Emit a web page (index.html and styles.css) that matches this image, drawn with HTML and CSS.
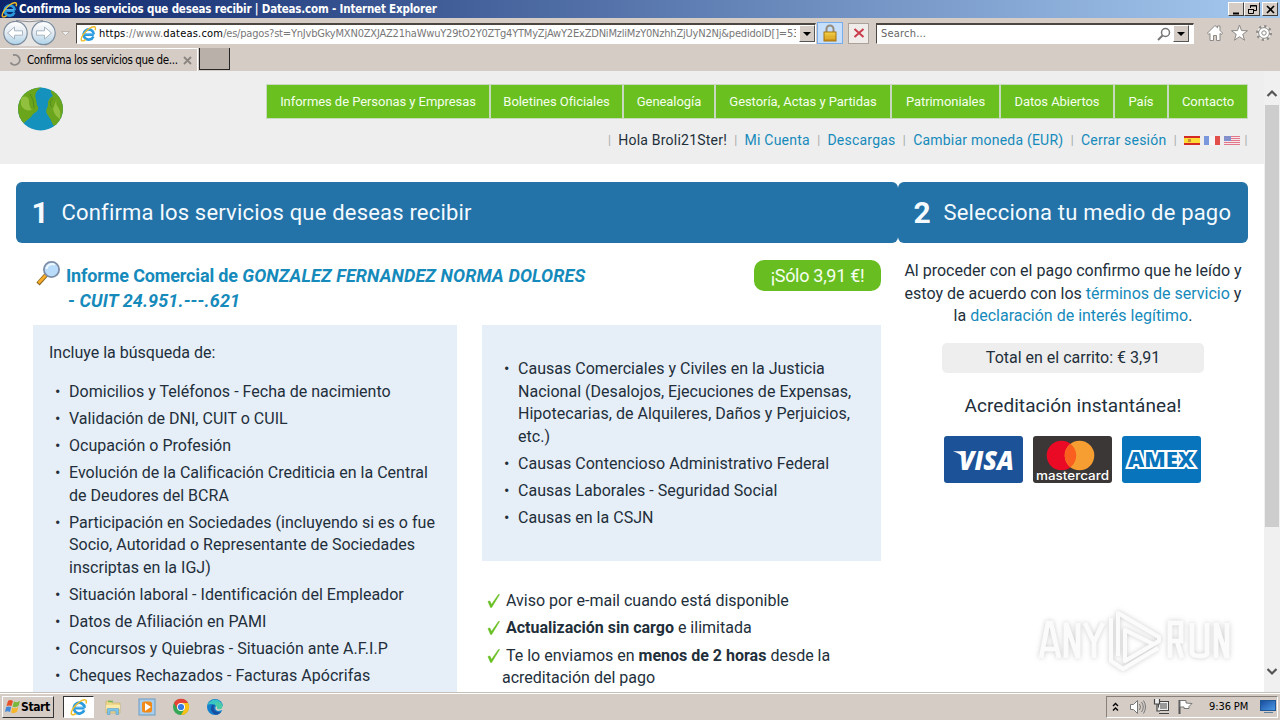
FILE: index.html
```html
<!DOCTYPE html>
<html lang="es">
<head>
<meta charset="utf-8">
<title>Confirma los servicios que deseas recibir | Dateas.com</title>
<link rel="stylesheet" href="styles.css">
</head>
<body>
<svg class="defs" width="0" height="0">
  <defs>
    <linearGradient id="round" x1="0" y1="0" x2="0" y2="1"><stop offset="0" stop-color="#fff"/><stop offset=".5" stop-color="#e3eaf1"/><stop offset="1" stop-color="#aed4ea"/></linearGradient>
    <linearGradient id="gold" x1="0" y1="0" x2="0" y2="1"><stop offset="0" stop-color="#f8d84e"/><stop offset="1" stop-color="#c88a10"/></linearGradient>
    <linearGradient id="screen" x1="0" y1="0" x2="1" y2="1"><stop offset="0" stop-color="#174b9c"/><stop offset="1" stop-color="#4c9be8"/></linearGradient>
    <symbol id="ie" viewBox="0 0 18 18">
      <path d="M14.6 10.2H5.4M14.2 12.2A5.4 5.4 0 1 1 14.6 9.8" fill="none" stroke="#2b9be0" stroke-width="2.8"/>
      <path d="M5.5 9.2h8" stroke="#86d0f8" stroke-width=".8"/>
      <path d="M16 5.5C17.5 1.500 14.500 .4 9.500 4 4.500 7.500 .3 13.500 1.500 16.200 2.300 17.500 4.500 16.500 6 15.300" fill="none" stroke="#f0bd27" stroke-width="1.500"/>
    </symbol>
  </defs>
</svg>

<div class="titlebar">
  <svg class="ico-title" width="17" height="17"><use href="#ie"/></svg>
  <span class="title-text">Confirma los servicios que deseas recibir | Dateas.com - Internet Explorer</span>
  <div class="winbtns">
    <svg width="16" height="14"><path d="M4 10.500h6" stroke="#000" stroke-width="2"/></svg>
    <svg width="16" height="14"><path d="M5.500 5V2.500h6v5H9M5 3h7M3.500 6.500h5v4h-5zM3 6.500h6" fill="none" stroke="#000"/></svg>
    <svg class="close" width="16" height="14"><path d="M4 3l7 7M11 3l-7 7" stroke="#000" stroke-width="1.600"/></svg>
  </div>
</div>

<div class="navbar">
  <svg class="arrows" width="74" height="30" viewBox="0 0 74 30">
    <path d="M15 2H44C50 2 55 7 56 14L44 28H15L3 14Z" fill="#e7e5e4"/>
    <path d="M16 2.500Q29 5 43 2.500" fill="none" stroke="#8d8d92"/>
    <circle cx="15.500" cy="15" r="11.700" fill="url(#round)" stroke="#7c8c9d" stroke-width="1.200"/>
    <circle cx="43.500" cy="15" r="11.700" fill="url(#round)" stroke="#7c8c9d" stroke-width="1.200"/>
    <path d="M7.500 15l7-6v3.800h8v4.400h-8V21Z" fill="#fff" stroke="#a7b6c5"/>
    <path d="M51.500 15l-7-6v3.800h-8v4.400h8V21Z" fill="#fff" stroke="#a7b6c5"/>
    <path d="M61.500 13.500h8l-4 4z" fill="#eee" stroke="#b2aca6" stroke-width=".8"/>
  </svg>
  <div class="address">
    <svg width="17" height="17"><use href="#ie"/></svg>
    <span class="url"><b>https</b>://www.<b>dateas.com</b><span class="path">/es/pagos?st=YnJvbGkyMXN0ZXJAZ21haWwuY29tO2Y0ZTg4YTMyZjAwY2ExZDNiMzliMzY0NzhhZjUyN2Nj&amp;pedidoID[]=53</span></span>
    <i class="drop"></i>
  </div>
  <div class="lock"><svg width="16" height="18"><path d="M4.500 9V5a3.500 3.500 0 0 1 7 0V9" fill="none" stroke="#958c7b" stroke-width="2"/><rect x="2" y="8" width="12" height="9" fill="url(#gold)" stroke="#a87410"/><path d="M3 11h10M3 14h10" stroke="#e9bd38"/></svg></div>
  <div class="stop"><svg width="14" height="14"><path d="M2.500 3l9 8M11.500 3l-9 8" stroke="#c93d4c" stroke-width="2"/></svg></div>
  <div class="search"><span>Search...</span>
    <svg width="14" height="14"><circle cx="8.500" cy="5.500" r="4" fill="none" stroke="#777" stroke-width="1.500"/><path d="M5.500 8.500L1 13" stroke="#777" stroke-width="2"/></svg><i class="drop"></i></div>
  <svg class="tools" width="70" height="20" viewBox="0 0 70 20" fill="#fff" stroke="#8c8986">
    <path d="M2.500 10L10 2.500l2.500 2.300V3h2.500v4.500l2.500 2.500-1 1.500-1.500-1V17.500h-3.500v-5h-3v5H5V10.500l-1.300 1z"/>
    <path d="M34.500 2l2 5.600 6 .1-4.700 3.600 1.700 5.900-5-3.500-5 3.500 1.700-5.900-4.700-3.600 6-.1z"/>
    <circle cx="59" cy="10" r="6.700" stroke-width="2.500" stroke-dasharray="2.200 3.060"/><circle cx="59" cy="10" r="5.400"/><circle cx="59" cy="10" r="2.200"/>
  </svg>
</div>

<div class="tabs">
  <div class="tab"><svg width="14" height="14"><path d="M5 2.200A5 5 0 1 1 2.500 9.500" fill="none" stroke="#8d8986" stroke-width="1.800"/></svg><span>Confirma los servicios que de...</span><svg class="x" width="9" height="9"><path d="M1 1l7 7M8 1l-7 7" stroke="#8b8580" stroke-width="1.800"/></svg></div>
  <div class="newtab"></div>
</div>

<div class="viewport">
<div class="page">
  <header>
    <svg class="globe" width="47" height="46" viewBox="0 0 47 46">
      <defs><clipPath id="g"><ellipse cx="23.500" cy="22" rx="22.500" ry="21.500"/></clipPath></defs>
      <g clip-path="url(#g)"><rect width="47" height="46" fill="#1591bd"/>
      <path d="M0 0H25Q16 5 19 12L20 18Q23 22 19 25 15 27 14 30L9 34 5 38 0 34Z" fill="#6aa51c"/>
      <path d="M34 0Q33 6 36 9 30 12 31 19 28 24 30 27 34 32 36 38L41 40 47 34V0Z" fill="#6ba41d"/>
      <path d="M4 10Q12 8 12 14T15 23Q7 25 4 18ZM40 11Q38 17 41 20T43 32Q37 28 36 22Z" fill="#91bf3e"/>
      <path d="M13 7l3 6 1 8M36 11q-5 5-1 9" fill="none" stroke="#4b8720" stroke-width=".8"/></g>
    </svg>
    <div class="menus">
      <nav><a class="n1">Informes de Personas y Empresas</a><a class="n2">Boletines Oficiales</a><a class="n3">Genealogía</a><a class="n4">Gestoría, Actas y Partidas</a><a class="n5">Patrimoniales</a><a class="n6">Datos Abiertos</a><a class="n7">País</a><a class="n8">Contacto</a></nav>
      <div class="user"><i>|</i><span>Hola Broli21Ster!</span><i>|</i><a>Mi Cuenta</a><i>|</i><a>Descargas</a><i>|</i><a>Cambiar moneda (EUR)</a><i>|</i><a>Cerrar sesión</a><i>|</i>
        <span class="flags">
        <svg width="16" height="9"><rect width="16" height="9" fill="#d52a24"/><rect y="2" width="16" height="5" fill="#fedb35"/><path d="M4 3h3v3H4z" fill="#d28b32"/></svg>
        <svg width="16" height="9"><rect width="16" height="9" fill="#f5f5f5"/><path d="M0 0h5v9H0z" fill="#7b97dc"/><path d="M11 0h5v9h-5z" fill="#e24e4c"/></svg>
        <svg width="16" height="9"><rect width="16" height="9" fill="#f6e5e9"/><path d="M0 .5h16M0 2.500h16M0 4.500h16M0 6.500h16M0 8.500h16" stroke="#e0788a"/><path d="M0 0h7v5H0z" fill="#8490cc"/></svg>
        </span><i>|</i></div>
    </div>
  </header>

  <main>
    <section class="services">
      <h1><b>1</b><span>Confirma los servicios que deseas recibir</span></h1>
      <div class="report">
        <h2>
          <svg width="25" height="25" viewBox="0 0 25 25"><path d="M2 23L10.500 13.500" stroke="#8b6624" stroke-width="4.400"/><path d="M2.500 22L10 14" stroke="#f9ad28" stroke-width="2.600"/><circle cx="15.500" cy="8.500" r="7.600" fill="#b9dcfb" stroke="#7e8ea7" stroke-width="1.800"/><path d="M10.500 8a5.500 5.500 0 0 1 8.500-4" fill="none" stroke="#edf7ff" stroke-width="2"/></svg>
          <span class="name"><span class="l1">Informe Comercial de <em>GONZALEZ FERNANDEZ NORMA DOLORES</em></span><br><em class="l2">- CUIT 24.951.---.621</em></span>
        </h2>
        <span class="price">¡Sólo 3,91 €!</span>
      </div>
      <div class="cols">
        <div class="box left">
          <p>Incluye la búsqueda de:</p>
          <ul>
            <li>Domicilios y Teléfonos - Fecha de nacimiento</li>
            <li>Validación de DNI, CUIT o CUIL</li>
            <li>Ocupación o Profesión</li>
            <li>Evolución de la Calificación Crediticia en la Central<br>de Deudores del BCRA</li>
            <li>Participación en Sociedades (incluyendo si es o fue<br>Socio, Autoridad o Representante de Sociedades<br>inscriptas en la IGJ)</li>
            <li>Situación laboral - Identificación del Empleador</li>
            <li>Datos de Afiliación en PAMI</li>
            <li>Concursos y Quiebras - Situación ante A.F.I.P</li>
            <li>Cheques Rechazados - Facturas Apócrifas</li>
          </ul>
        </div>
        <div class="rightcol">
          <div class="box right">
            <ul>
              <li>Causas Comerciales y Civiles en la Justicia<br>Nacional (Desalojos, Ejecuciones de Expensas,<br>Hipotecarias, de Alquileres, Daños y Perjuicios,<br>etc.)</li>
              <li>Causas Contencioso Administrativo Federal</li>
              <li>Causas Laborales - Seguridad Social</li>
              <li>Causas en la CSJN</li>
            </ul>
          </div>
          <ul class="checks">
            <li><svg width="15" height="16"><path d="M2 8.500L3.800 8 5.500 11.500 12.500 1.500 13.500 1.500 5.600 14.500H4.600Z" fill="#68bf22" stroke="#68bf22" stroke-width=".6"/></svg><span>Aviso por e-mail cuando está disponible</span></li>
            <li><svg width="15" height="16"><path d="M2 8.500L3.800 8 5.500 11.500 12.500 1.500 13.500 1.500 5.600 14.500H4.600Z" fill="#68bf22" stroke="#68bf22" stroke-width=".6"/></svg><span><b>Actualización sin cargo</b> e ilimitada</span></li>
            <li><svg width="15" height="16"><path d="M2 8.500L3.800 8 5.500 11.500 12.500 1.500 13.500 1.500 5.600 14.500H4.600Z" fill="#68bf22" stroke="#68bf22" stroke-width=".6"/></svg><span>Te lo enviamos en <b>menos de 2 horas</b> desde la<br><span class="out">acreditación del pago</span></span></li>
          </ul>
        </div>
      </div>
    </section>
    <section class="payment">
      <h1><b>2</b><span>Selecciona tu medio de pago</span></h1>
      <p class="terms">Al proceder con el pago confirmo que he leído y<br>estoy de acuerdo con los <a>términos de servicio</a> y<br>la <a>declaración de interés legítimo</a>.</p>
      <div class="total">Total en el carrito: € 3,91</div>
      <div class="instant">Acreditación instantánea!</div>
      <div class="cards">
        <svg width="79" height="47"><rect width="79" height="47" rx="3" fill="#1c5297"/><text x="15" y="34" textLength="55" lengthAdjust="spacingAndGlyphs" font-family="Open Sans, sans-serif" font-size="26" font-weight="800" font-style="italic" fill="#fff">VISA</text><path d="M9 15.300h9l2 7Q16 17.500 9 15.300" fill="#fff"/></svg>
        <svg width="79" height="47"><rect width="79" height="47" rx="3" fill="#3a3736"/><circle cx="28.500" cy="19.500" r="14.800" fill="#eb0a25"/><circle cx="46.500" cy="19.500" r="14.800" fill="#f79e32"/><path d="M37.500 7.800a14.800 14.800 0 0 1 0 23.400a14.800 14.800 0 0 1 0-23.400" fill="#fb5f20"/><text x="3" y="44" textLength="73" lengthAdjust="spacingAndGlyphs" font-family="Inter, sans-serif" font-size="12.500" font-weight="500" fill="#fff">mastercard</text></svg>
        <svg width="79" height="47"><rect width="79" height="47" rx="3" fill="#0874bb"/><text class="amex" x="6" y="30.500" textLength="66" lengthAdjust="spacingAndGlyphs">AMEX</text></svg>
      </div>
      <svg class="watermark" width="206" height="74" viewBox="0 0 206 74">
        <defs><filter id="sh" x="-10%" y="-20%" width="120%" height="140%"><feDropShadow dx="0" dy="0" stdDeviation="2.500" flood-color="#888" flood-opacity=".45"/></filter></defs>
        <g filter="url(#sh)" fill="none" stroke="#fbfbfb" stroke-width="4.500">
          <path d="M9 54L16 19H19L27 54M12 45H24M34 54V19L46 54V19M53 19L62 38V54M62 38L71 19"/>
          <path d="M79 14V57L91 65L126 44M86 52V9L127 33V37L93 57V26L121 40" stroke-width="4" stroke-linejoin="round"/>
          <path d="M138 54V19H149V37H138M145 37L150 54M160 19V48Q160 52 168 52T175 48V19M184 54V19L195 54V19"/>
        </g>
      </svg>
    </section>
  </main>
</div>
<div class="scrollbar"><svg width="16" height="34"><path d="M3.500 25l4.500-4.500L12.500 25" fill="none" stroke="#555" stroke-width="2.200"/></svg><div class="thumb"></div><svg class="down" width="16" height="16"><path d="M3.500 5L8 9.500 12.500 5" fill="none" stroke="#555" stroke-width="2.200"/></svg></div>
</div>

<footer>
  <div class="start"><svg width="16" height="17" viewBox="0 0 16 17"><path d="M3 3Q5 1 8 3L6.500 8Q4 7 1.500 8Z" fill="#e65128"/><path d="M9 3.500Q12 5 15 3L13.500 8Q10.500 10 7.500 8.500Z" fill="#79b83b"/><path d="M1.200 9Q4 8 6.200 9L5 14Q2.500 12.500 0 14Z" fill="#4489d8"/><path d="M7.200 9.500Q10 11 13.200 9.300L12 14Q9 16 6 14.500Z" fill="#f6b72d"/></svg><b>Start</b></div>
  <div class="active"><svg width="18" height="18"><use href="#ie"/></svg></div>
  <svg class="folder" width="18" height="18"><path d="M2 3h5l1 2h8v10H2z" fill="#efd88c" stroke="#c9b06a" stroke-width=".7"/><path d="M4 3.500h5" stroke="#75b953" stroke-width="1.500"/><path d="M2 7h14v4H2z" fill="#fae9a8"/><path d="M3.500 16.500v-6h11v6h-2.500v-3.500H6v3.500z" fill="#7cc4ec" stroke="#5b9fc4" stroke-width=".6"/></svg>
  <svg class="media" width="18" height="18"><rect x="1" y="1" width="16" height="16" fill="#a9cdea" stroke="#6b9cc4"/><rect x="4" y="3.500" width="10" height="11" rx="2.500" fill="#f28a18"/><path d="M7 5l6 4-6 4z" fill="#fff"/></svg>
  <svg class="chrome" width="18" height="18"><circle cx="9" cy="9" r="8" fill="#36a754"/><path d="M2 5A8 8 0 0 1 16 5H9L5.500 11Z" fill="#e54336"/><path d="M16 5A8 8 0 0 1 9 17L12.500 11 9 5Z" fill="#fbc116"/><circle cx="9" cy="9" r="4" fill="#fff"/><circle cx="9" cy="9" r="3.100" fill="#347be4"/></svg>
  <svg class="edge" width="18" height="18"><circle cx="9" cy="9" r="8" fill="#137fcb"/><path d="M1.500 7A8 8 0 0 1 17 9Q17 12 13 12 10 12 11 9 10 6 6 6 3 6 1.500 7" fill="#39c5c3"/><path d="M6 7Q3 12 8 16 12 18 15 14 10 15 8 11 7 8 9 7Z" fill="#1750a2"/><path d="M10 8Q8 12 12 13L17 12V8Z" fill="#d5d0c9"/><path d="M9 7Q9 3 15 5 18 9 15 11 10 12 11 9Z" fill="#48cba6"/></svg>
  <div class="tray">
    <svg class="chev" width="8" height="12"><path d="M1 5l2.500-2.500L6 5M1 9.500L3.500 7 6 9.500" fill="none" stroke="#000" stroke-width="1.400"/></svg>
    <svg class="sound" width="18" height="16" fill="#fff" stroke="#777"><path d="M1.500 5.500h3l4-4v13l-4-4h-3z"/><path d="M10.500 5q2 3 0 6M12.500 3q3.500 5 0 10M14.500 1.500q4 6.500 0 13" fill="none"/></svg>
    <svg class="net" width="18" height="17"><rect x="5.500" y="3.500" width="10" height="9" fill="#999" stroke="#444"/><rect x="6.500" y="4.500" width="8" height="7" fill="none" stroke="#eee"/><path d="M1.500 1v5h5V1M4 6v7h3M6 15.500h10" fill="#eee" stroke="#444" stroke-width="1.200"/></svg>
    <svg class="flag" width="18" height="17"><path d="M3.500 2v14" stroke="#555" stroke-width="2"/><path d="M4 2.500h6v2.500l6 .5-3 3v2H8V9H4z" fill="#fff" stroke="#777"/></svg>
    <span class="clock">9:36 PM</span>
    <svg class="desk" width="17" height="15"><rect x=".5" y="1.500" width="15" height="10" fill="url(#screen)" stroke="#1e5698"/><path d="M4 13.500h9" stroke="#607d9b"/></svg>
  </div>
</footer>
</body>
</html>
```
FILE: styles.css
```css
* { box-sizing: border-box; }
body { margin: 0; width: 1280px; height: 720px; overflow: hidden; display: flex; flex-direction: column; background: #d4ccc5; font-family: Roboto, sans-serif; color: #222f3b; }
svg { display: block; flex-shrink: 0; }
.defs { position: absolute; }
i { font-style: normal; }
a { color: #158abb; }
ul, p, h1, h2 { margin: 0; padding: 0; list-style: none; font-weight: 400; }

.titlebar { height: 18px; flex: none; display: flex; align-items: center; background: linear-gradient(90deg, #0b246a, #a6caf0); color: #fff; font: bold 11.5px "DejaVu Sans Condensed", sans-serif; }
.ico-title { margin-left: 1px; }
.title-text { margin-left: 1px; white-space: nowrap; letter-spacing: -.18px; }
.winbtns { margin-left: auto; margin-right: 2px; display: flex; }
.winbtns svg { background: #d4ccc5; border: 1px solid; border-color: #fff #404040 #404040 #fff; }
.winbtns .close { margin-left: 2px; }

.navbar { height: 30px; flex: none; display: flex; align-items: center; }
.arrows { margin-right: 2px; }
.address, .search { display: flex; align-items: center; height: 21px; background: #fff; border: 1px solid; border-color: #4d4641 #fff #fff #4d4641; border-top-width: 2px; font: 11px "DejaVu Sans Condensed", sans-serif; }
.address { width: 740px; padding-left: 3px; }
.url { width: 697px; margin-left: 2px; overflow: hidden; white-space: nowrap; color: #777; letter-spacing: .2px; }
.url b { font-weight: 400; color: #000; }
.path { letter-spacing: -.2px; }
.drop { width: 16px; height: 17px; margin-left: auto; background: #d4ccc5; border: 1px solid; border-color: #fff #555 #555 #fff; display: flex; align-items: center; justify-content: center; }
.drop::after { content: ""; border: 4px solid transparent; border-top-color: #000; border-bottom: 0; }
.lock { width: 26px; height: 22px; margin-left: 1px; background: #c5dffc; border: 1px solid #78acec; display: flex; justify-content: center; align-items: center; }
.stop { width: 21px; height: 21px; margin-left: 5px; background: #f0ecea; border: 1px solid #aaa19a; display: flex; justify-content: center; align-items: center; }
.search { width: 318px; margin-left: 7px; padding: 0 4px 0 4px; color: #666; }
.search span { letter-spacing: .2px; }
.search svg { margin-left: auto; margin-right: 2px; }
.search .drop { margin-left: 0; }
.tools { margin-left: 11px; }

.tabs { height: 23px; flex: none; display: flex; }
.tab { width: 198px; border: 1px solid #fff; border-width: 1px 1px 0 0; display: flex; align-items: center; padding-left: 8px; font: 11.5px "DejaVu Sans Condensed", sans-serif; color: #000; }
.tab span { margin-left: 5px; white-space: nowrap; letter-spacing: -.37px; }
.tab .x { margin-left: auto; margin-right: 5px; }
.newtab { width: 31px; height: 22px; margin-left: 1px; background: #b9b0aa; border: 1px solid #252525; border-width: 0 1px 1px; }

.viewport { height: 621px; flex: none; display: flex; background: #fff; overflow: hidden; }
.page { width: 1264px; }
header { height: 93px; background: #eee; display: flex; justify-content: space-between; padding: 13px 16px 0 17px; }
.globe { margin-top: 3px; }
nav { display: flex; height: 35px; margin-left: auto; border: 1px solid #c9d9c0; }
nav a { background: #6ac01f; color: #f4ffed; font-size: 13px; line-height: 33px; text-align: center; letter-spacing: -.06px; white-space: nowrap; border-left: 2px solid #c9d9c0; }
nav a:first-child { border-left: 0; }
.menus { display: flex; flex-direction: column; align-items: flex-end; }
.n1 { width: 222px; } .n2 { width: 133px; } .n3 { width: 92px; } .n4 { width: 176px; } .n5 { width: 109px; } .n6 { width: 114px; } .n7 { width: 54px; } .n8 { width: 80px; }
.user { display: flex; align-items: center; height: 22px; margin-top: 10px; font-size: 14px; letter-spacing: .22px; white-space: nowrap; }
.user i { color: #aaa; width: 4px; margin: 0 6.800px; font-size: 12px; text-align: center; letter-spacing: 0; }
.user i:last-child { margin-right: 0; margin-left: 4px; }
.flags { display: flex; gap: 4px; }

main { display: flex; padding: 18px 16px 0; height: 528px; }
h1 { height: 61px; background: #2372a8; border-radius: 6px; color: #f4faff; display: flex; align-items: center; padding-left: 15.500px; font-size: 22px; white-space: nowrap; }
h1 b { width: 17px; font-size: 30px; margin-right: 13px; }
h1 span { letter-spacing: .19px; }
.services { width: 882px; }
.report { display: flex; justify-content: space-between; padding: 17px 17px 0 20px; height: 82px; }
h2 { display: flex; color: #158abb; font-size: 18px; line-height: 25px; font-weight: 700; }
h2 svg { margin-top: 1px; }
.name { margin: 3px 0 0 5px; white-space: nowrap; }
.l1 { letter-spacing: -.15px; }
.l1 em, .l2 { letter-spacing: .11px; }
.l2 { margin-left: 2px; }
.price { width: 127px; height: 31px; border-radius: 10px; background: #68be20; color: #f5fff0; font-size: 18px; line-height: 31px; letter-spacing: -.3px; text-align: center; }
.cols { display: flex; gap: 25px; padding-left: 17px; font-size: 16px; line-height: 22.4px; white-space: nowrap; }
.box { background: #e6eef7; }
.left { width: 424px; height: 400px; padding: 16.700px 0 0 16px; }
.box ul { padding-left: 20px; }
.left ul { margin-top: 16.900px; }
.box li { margin-bottom: 4.7px; letter-spacing: .02px; }
.box li::before { content: "•"; float: left; width: 14px; margin-left: -14px; font-size: 16px; }
.rightcol { width: 399px; }
.right { height: 236px; padding: 33.400px 0 0 16px; }
.checks { padding: 29px 0 0 4px; }
.checks li { display: flex; margin-bottom: 4.900px; }
.checks svg { margin-top: 3px; margin-right: 5px; }
.out { margin-left: -4px; }

.payment { width: 350px; position: relative; }
.terms { margin-top: 17.300px; font-size: 16px; line-height: 22.4px; text-align: center; white-space: nowrap; }
.total { width: 262px; height: 30px; margin: 15.500px auto 0 44px; border-radius: 5px; background: #eee; text-align: center; font-size: 16px; line-height: 30px; }
.instant { margin-top: 19px; font-size: 19px; line-height: 27px; letter-spacing: .06px; text-align: center; }
.cards { display: flex; gap: 10px; margin: 17px 0 0 46px; }
.amex { font: 800 21px "Open Sans", sans-serif; fill: #0874bb; stroke: #fff; stroke-width: 4px; paint-order: stroke; }
.watermark { position: absolute; left: 134px; top: 422px; }
.scrollbar { width: 16px; background: #f0f0f0; display: flex; flex-direction: column; }
.thumb { width: 14px; height: 422px; margin-left: 1px; background: #cdcdcd; }
.down { margin-top: auto; margin-bottom: 12px; }

footer { height: 28px; flex: none; border-top: 1px solid #c5bfb8; box-shadow: inset 0 1px #fff; display: flex; align-items: center; padding-left: 2px; }
.start { width: 52px; height: 22px; border: 1px solid; border-color: #fff #333 #333 #fff; display: flex; align-items: center; padding-left: 2px; color: #000; font: 12px "DejaVu Sans Condensed", sans-serif; }
.start b { margin-left: 0; letter-spacing: -.4px; }
.active { width: 31px; height: 22px; margin-left: 9px; border: 1px solid; border-color: #333 #fff #fff #333; background: #fff; display: flex; align-items: center; justify-content: center; }
.folder { margin-left: 10px; }
.media, .chrome, .edge { margin-left: 16px; }
.tray { width: 172px; height: 22px; margin-left: auto; margin-right: 2px; border: 1px solid; border-color: #898079 #fff #fff #898079; display: flex; align-items: center; color: #000; font: 11px "DejaVu Sans Condensed", sans-serif; }
.chev { margin-left: 5px; }
.sound { margin-left: 9px; }
.net { margin-left: 6px; }
.flag { margin-left: 5px; }
.clock { width: 42px; margin-left: 15px; white-space: nowrap; letter-spacing: -.1px; }
.desk { margin-left: 9px; }
```
